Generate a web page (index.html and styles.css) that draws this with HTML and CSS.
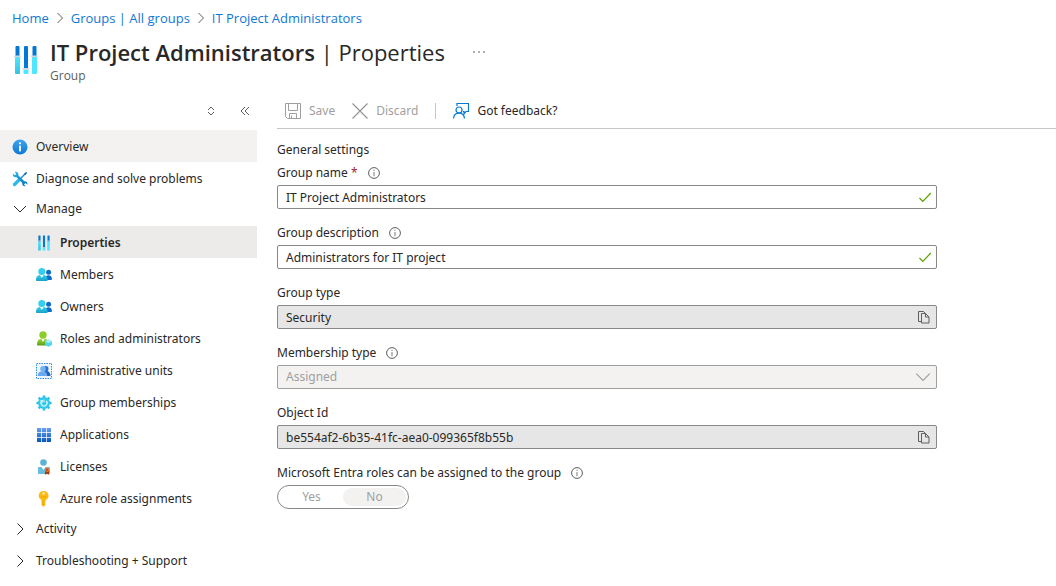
FILE: index.html
```html
<!DOCTYPE html>
<html lang="en">
<head>
<meta charset="utf-8">
<meta name="viewport" content="width=device-width, initial-scale=1">
<title>IT Project Administrators | Properties</title>
<link rel="stylesheet" href="styles.css">
</head>
<body>
<svg class="defs" width="0" height="0" aria-hidden="true">
  <defs>
    <linearGradient id="gBlue" x1="0" y1="0" x2="0" y2="1"><stop offset="0" stop-color="#3fa4ee"/><stop offset="1" stop-color="#0f78d4"/></linearGradient>
    <linearGradient id="gCyan" x1="0" y1="0" x2="0" y2="1"><stop offset="0" stop-color="#32d4f5"/><stop offset="1" stop-color="#1f9fc4"/></linearGradient>
    <linearGradient id="gGreen" x1="0" y1="0" x2="0" y2="1"><stop offset="0" stop-color="#9fdc38"/><stop offset="1" stop-color="#5e9a17"/></linearGradient>
    <linearGradient id="gGrid" x1="0" y1="0" x2="0" y2="1"><stop offset="0" stop-color="#6a9ff0"/><stop offset="1" stop-color="#0558b8"/></linearGradient>
    <linearGradient id="gBar" x1="0" y1="0" x2="0" y2="1"><stop offset="0" stop-color="#50e6ff"/><stop offset="1" stop-color="#32c3e0"/></linearGradient>
    <linearGradient id="gTool" x1="0" y1="0" x2="1" y2="1"><stop offset="0" stop-color="#28b8e8"/><stop offset="1" stop-color="#0a6fbe"/></linearGradient>
    <symbol id="bars" viewBox="0 0 24 30">
      <rect x="1.500" y="1" width="4" height="12" rx="1" fill="#0078d4"/><rect x="1" y="12" width="5" height="17" rx="1" fill="url(#gBar)"/><rect x="0" y="10.500" width="7" height="1.500" fill="#d5d5d5"/>
      <rect x="10" y="1" width="4" height="23" rx="1" fill="#0078d4"/><rect x="9.500" y="24.500" width="5" height="4.500" rx="1" fill="#50e6ff"/><rect x="8.500" y="23" width="7" height="1.500" fill="#d5d5d5"/>
      <rect x="18.500" y="1" width="4" height="12" rx="1" fill="#0078d4"/><rect x="18" y="12" width="5" height="17" rx="1" fill="#50e6ff"/><rect x="17" y="10.500" width="7" height="1.500" fill="#d5d5d5"/>
    </symbol>
    <symbol id="chev" viewBox="0 0 16 16"><path d="M5.500 2.500 11 8l-5.500 5.500" fill="none" stroke="currentColor"/></symbol>
    <symbol id="crumb" viewBox="0 0 8 12"><path d="M1.500 1l5 5-5 5" fill="none" stroke="currentColor"/></symbol>
    <symbol id="chevdown" viewBox="0 0 16 16"><path d="M2 5l6 6 6-6" fill="none" stroke="currentColor"/></symbol>
    <symbol id="info" viewBox="0 0 12 12"><circle cx="6" cy="6" r="5.400" fill="none" stroke="#605e5c" stroke-width="1"/><path d="M6 5v4.200M6 2.800v1.200" stroke="#888" stroke-width="1.100"/></symbol>
    <symbol id="check" viewBox="0 0 14 14"><path d="M1.500 8l3.300 3.300L12.800 3" fill="none" stroke="#57a300" stroke-width="1.200"/></symbol>
    <symbol id="copy" viewBox="0 0 14 14"><path d="M4.500 11.500h-3v-10h5l2 2M4.500 3.500h4l3.500 3.500v6H4.500zM8.500 3.500V7H12" fill="none" stroke="#605e5c"/></symbol>
    <symbol id="people" viewBox="0 0 16 16">
      <circle cx="12.600" cy="5.300" r="2.500" fill="#0f6cc9"/><path d="M9 13c0-3.500 1.500-4.800 3.500-4.800S16 9.500 16 12c0 .6-.3 1-.9 1z" fill="#0f6cc9"/>
      <path d="M0 13c0-3.500 2-5.300 5.800-5.300s5.800 1.800 5.800 5.300c0 .6-.4 1-1 1H1c-.6 0-1-.4-1-1z" fill="url(#gCyan)"/><path d="M3.800 7.800h4l-2 3.200z" fill="#fff"/><circle cx="5.800" cy="4.600" r="3.500" fill="#35cdf0"/>
    </symbol>
  </defs>
</svg>

<header class="top">
  <nav class="crumbs" aria-label="Breadcrumb">
    <a href="#">Home</a><svg class="sep"><use href="#crumb"/></svg><a href="#">Groups | All groups</a><svg class="sep"><use href="#crumb"/></svg><a href="#">IT Project Administrators</a>
  </nav>
  <div class="heading">
    <svg class="heading-icon"><use href="#bars"/></svg>
    <div class="heading-text">
      <div class="title-row">
        <h1><strong>IT Project Administrators</strong> | Properties</h1>
        <button class="more" type="button" aria-label="More"><svg width="12" height="4" viewBox="0 0 12 4"><path d="M0 2h2M5 2h2M10 2h2" stroke="#605e5c" stroke-width="1.200"/></svg></button>
      </div>
      <p class="kind">Group</p>
    </div>
  </div>
</header>

<div class="shell">
  <aside class="side">
    <div class="side-tools">
      <button type="button" aria-label="Expand or collapse all"><svg width="10" height="10" viewBox="0 0 10 10"><path d="M2 4l3-3 3 3M2 6l3 3 3-3" fill="none" stroke="#605e5c"/></svg></button>
      <button type="button" aria-label="Collapse menu"><svg width="10" height="10" viewBox="0 0 10 10"><path d="M5 1L1 5l4 4M9 1L5 5l4 4" fill="none" stroke="#605e5c"/></svg></button>
    </div>
    <nav class="menu" aria-label="Group menu">
      <a class="item hover" href="#"><svg viewBox="0 0 16 16"><circle cx="8" cy="8" r="7.500" fill="url(#gBlue)"/><circle cx="8" cy="4.300" r="1.100" fill="#fff"/><rect x="7.100" y="6.400" width="1.800" height="6" rx=".6" fill="#fff"/></svg>Overview</a>
      <a class="item" href="#"><svg viewBox="0 0 16 16"><path d="M7 9L14 2" stroke="#2a86c8" stroke-width="1.400"/><path d="M2.500 13.500l4-4" stroke="#2cb9e8" stroke-width="3.200" stroke-linecap="round"/><path d="M14.300 1l.8.800-1.700 2.400-1.400-1.400z" fill="#1a6fb0"/><path d="M1 2.400l1.900 1.900 1.500-1.500L2.600 1C4.900.2 6.900 2 6.300 4.300l6 6c2.100-.4 3.600 1.300 3 3.400l-1.800-1.700-1.500 1.500 1.700 1.700c-2.100.6-3.900-.9-3.500-3.100l-6-6C2 6.600.3 4.700 1 2.400z" fill="url(#gTool)"/></svg>Diagnose and solve problems</a>
      <button class="item" type="button" aria-expanded="true"><svg><use href="#chevdown"/></svg>Manage</button>
      <a class="item sub current" href="#" aria-current="page"><svg><use href="#bars"/></svg>Properties</a>
      <a class="item sub" href="#"><svg><use href="#people"/></svg>Members</a>
      <a class="item sub" href="#"><svg><use href="#people"/></svg>Owners</a>
      <a class="item sub" href="#"><svg viewBox="0 0 16 16"><path d="M1 13.500c0-4 2-6 6-6s6 2 6 6c0 .6-.4 1-1 1H2c-.6 0-1-.4-1-1z" fill="url(#gGreen)"/><path d="M5 7.500h4L7 11z" fill="#fff"/><circle cx="7" cy="4" r="3.700" fill="#8ccc2c"/><path d="M12.500 8.500l3.500 1.700v3.700l-3.500 1.800L9 13.900v-3.700z" fill="#50d5ef"/><path d="M9 10.200l3.500 1.800 3.500-1.800-3.500-1.700z" fill="#a5f0fb"/></svg>Roles and administrators</a>
      <a class="item sub" href="#"><svg viewBox="0 0 16 16"><rect x=".5" y=".5" width="15" height="15" fill="#eef6fd" stroke="#3390df" stroke-dasharray="1.500 1"/><circle cx="9.700" cy="5.800" r="2.800" fill="#2a72cc"/><path d="M7 13c0-3.500 1-5 3.500-5s4 2 4 5z" fill="#1c62b8"/><circle cx="7" cy="5.800" r="2.800" fill="#73b4f4"/><path d="M1.700 13c0-3 1.500-4.800 4.800-4.800S11.300 10 11.300 13z" fill="#6aa8f2"/></svg>Administrative units</a>
      <a class="item sub" href="#"><svg viewBox="0 0 16 16"><path d="M8 .5v15M.5 8h15M2.700 2.700l10.600 10.600M13.300 2.700L2.700 13.300" stroke="#29bce5" stroke-width="2.600"/><circle cx="8" cy="8" r="6" fill="#32c8ec"/><path d="M5.700 6a3 3 0 1 0 4.600 0" fill="none" stroke="#d9f7ff" stroke-width="1.300"/><path d="M4.500 5.500h2.300v2.300M8 4.500V7" fill="none" stroke="#d9f7ff"/></svg>Group memberships</a>
      <a class="item sub" href="#"><svg viewBox="0 0 16 16"><path d="M1 1h4.200v4.200H1zM5.900 1h4.200v4.200H5.900zM10.800 1H15v4.200h-4.200zM1 5.900h4.200v4.200H1zM5.900 5.900h4.200v4.200H5.900zM10.800 5.900H15v4.200h-4.200zM1 10.800h4.200V15H1zM5.900 10.800h4.200V15H5.900zM10.800 10.800H15V15h-4.200z" fill="url(#gGrid)"/></svg>Applications</a>
      <a class="item sub" href="#"><svg viewBox="0 0 16 16"><path d="M2 9c0-.7.400-1 1-1h10c.6 0 1 .3 1 1v5c0 .6-.4 1-1 1H3c-.6 0-1-.4-1-1z" fill="#69bcdc"/><path d="M5.500 8h4l-2 3z" fill="#fff"/><circle cx="7.500" cy="3.500" r="3.300" fill="#5cb2d8"/><path d="M9 11h4v4.800l-2-1-2 1z" fill="#a33a14"/><circle cx="11" cy="10.800" r="2.200" fill="#e8762c"/><circle cx="11" cy="10.800" r="1" fill="#b34512"/></svg>Licenses</a>
      <a class="item sub" href="#"><svg viewBox="0 0 16 16"><path d="M7.500 0c3 0 5 2 5 4.700 0 1.900-1 3.400-2.700 4.100v1.200l-.9.900.9.900-.9.900.9.900-2.300 2.400-2-2V8.800C3.800 8.100 2.700 6.600 2.700 4.700 2.700 2 4.600 0 7.500 0z" fill="#fdba13"/><path d="M7 8.500v5.500" stroke="#e9a000" stroke-width=".8"/><circle cx="7.600" cy="2.500" r="1.200" fill="#fff0c0"/><path d="M5 5.800h5.200" stroke="#eda400"/></svg>Azure role assignments</a>
      <button class="item" type="button" aria-expanded="false"><svg><use href="#chev"/></svg>Activity</button>
      <button class="item" type="button" aria-expanded="false"><svg><use href="#chev"/></svg>Troubleshooting + Support</button>
    </nav>
  </aside>

  <main class="main">
    <div class="toolbar">
      <button class="cmd" type="button" disabled><svg viewBox="0 0 16 16"><path d="M.5 .5h15v15h-13l-2-2zM3.500 .5v7h9v-7M4.500 15.500v-5h7v5M6.500 12.500v3" fill="none" stroke="#a19f9d"/></svg>Save</button>
      <button class="cmd" type="button" disabled><svg viewBox="0 0 16 16"><path d="M.5 .5l15 15M15.500 .5l-15 15" fill="none" stroke="#979593" stroke-width="1.200"/></svg>Discard</button>
      <span class="divider"></span>
      <button class="cmd" type="button"><svg viewBox="0 0 16 16"><path d="M4 3V.5h11.500v8H13l-2 2.500V8.500H10" fill="none" stroke="#0078d4" stroke-width="1.200"/><circle cx="6" cy="7" r="3" fill="none" stroke="#0078d4" stroke-width="1.200"/><path d="M.6 15.500c0-3.300 2-5.400 5.400-5.400s5.400 2.100 5.400 5.400" fill="none" stroke="#0078d4" stroke-width="1.200"/></svg>Got feedback?</button>
    </div>
    <form class="form">
      <h2>General settings</h2>
      <div class="field">
        <div class="label"><label for="name">Group name <span class="req">*</span></label><svg class="info"><use href="#info"/></svg></div>
        <div class="box"><input id="name" type="text" value="IT Project Administrators" required><svg><use href="#check"/></svg></div>
      </div>
      <div class="field">
        <div class="label"><label for="desc">Group description</label><svg class="info"><use href="#info"/></svg></div>
        <div class="box"><input id="desc" type="text" value="Administrators for IT project"><svg><use href="#check"/></svg></div>
      </div>
      <div class="field">
        <div class="label"><label for="type">Group type</label></div>
        <div class="box readonly"><input id="type" type="text" value="Security" readonly><button type="button" aria-label="Copy group type"><svg><use href="#copy"/></svg></button></div>
      </div>
      <div class="field">
        <div class="label"><label for="membership">Membership type</label><svg class="info"><use href="#info"/></svg></div>
        <div class="box disabled"><select id="membership" disabled><option>Assigned</option></select><svg class="arrow"><use href="#chevdown"/></svg></div>
      </div>
      <div class="field">
        <div class="label"><label for="oid">Object Id</label></div>
        <div class="box readonly"><input id="oid" type="text" value="be554af2-6b35-41fc-aea0-099365f8b55b" readonly><button type="button" aria-label="Copy object id"><svg><use href="#copy"/></svg></button></div>
      </div>
      <div class="field" role="radiogroup" aria-labelledby="roles">
        <div class="label"><span id="roles">Microsoft Entra roles can be assigned to the group</span><svg class="info"><use href="#info"/></svg></div>
        <div class="toggle">
          <label><input type="radio" name="roles" disabled><span>Yes</span></label>
          <label><input type="radio" name="roles" checked disabled><span>No</span></label>
        </div>
      </div>
    </form>
  </main>
</div>
</body>
</html>
```
FILE: styles.css
```css
* { box-sizing: border-box; }
body {
  margin: 0;
  background: #fff;
  color: #292827;
  font: 12px/18px "Segoe UI", "Noto Sans", "Open Sans", sans-serif;
}
button, input, select { font: inherit; color: inherit; }
button { border: 0; padding: 0; background: none; text-align: left; }
svg { display: block; flex: none; }
a { color: inherit; text-decoration: none; }
h1, h2, p { margin: 0; font-weight: 400; }
.defs { position: absolute; }

.top { font-family: "Segoe UI", "Open Sans", "Noto Sans", sans-serif; }
.crumbs { display: flex; align-items: center; height: 36px; padding-left: 12px; gap: 7px; font-size: 13px; }
.crumbs a { color: #0f78d4; }
.sep { width: 8px; height: 12px; color: #605e5c; }

.heading { display: flex; gap: 12px; padding-left: 14px; height: 58px; }
.heading-icon { width: 24px; height: 30px; margin-top: 9px; }
.title-row { display: flex; align-items: center; gap: 28px; height: 32px; }
h1 { font-size: 22px; line-height: 32px; white-space: nowrap; }
h1 strong { font-weight: 600; }
.kind { font-size: 12px; line-height: 16px; color: #605e5c; }

.shell { display: flex; }
.side { flex: none; width: 257px; }
.side-tools { display: flex; justify-content: flex-end; align-items: center; gap: 24px; height: 36px; padding: 0 7px 2px 0; }
.side-tools button { display: flex; }
.item { display: flex; align-items: center; gap: 8px; width: 100%; height: 32px; padding: 2px 12px 0; }
button.item { padding: 0 12px 2px; }
.item svg { width: 16px; height: 16px; }
.item.sub { padding-left: 36px; }
.hover { background: #f3f2f1; }
.current { background: #edebe9; font-weight: 600; }

.main { flex: 1; min-width: 0; padding-left: 20px; }
.toolbar { display: flex; align-items: center; height: 35px; padding-left: 8px; gap: 17px; border-bottom: 1px solid #c8c6c4; }
.cmd { display: flex; align-items: center; gap: 8px; }
.cmd svg { width: 16px; height: 16px; }
.cmd:disabled { color: #a19f9d; }
.divider { width: 1px; height: 16px; background: #c8c6c4; }

.form { max-width: 660px; padding-top: 10px; }
h2 { font-size: 12px; line-height: 22px; }
.field { margin-bottom: 12px; }
.label { display: flex; align-items: center; gap: 10px; height: 24px; }
.req { color: #a4262c; }
.info { width: 12px; height: 12px; }
.box { display: flex; align-items: center; height: 24px; padding: 0 4px 0 8px; border: 1px solid #8a8886; border-radius: 2px; }
.box input, .box select { flex: 1; min-width: 0; height: 22px; padding: 0; border: 0; background: none; outline: 0; appearance: none; }
.box svg { width: 14px; height: 14px; }
.box .arrow { width: 18px; height: 18px; color: #a19f9d; }
.readonly { background: #e6e6e6; }
.readonly button { padding-right: 1px; }
.disabled { background: #f3f2f1; border-color: #a19f9d; }
.box select:disabled { color: #a19f9d; opacity: 1; }
.toggle { display: flex; width: 132px; height: 24px; padding: 2px; border: 1px solid #8a8886; border-radius: 12px; color: #a19f9d; }
.toggle label { flex: 1; }
.toggle input { position: absolute; opacity: 0; }
.toggle span { display: block; border-radius: 9px; line-height: 18px; text-align: center; }
.toggle input:checked + span { background: #f3f2f1; }
```
